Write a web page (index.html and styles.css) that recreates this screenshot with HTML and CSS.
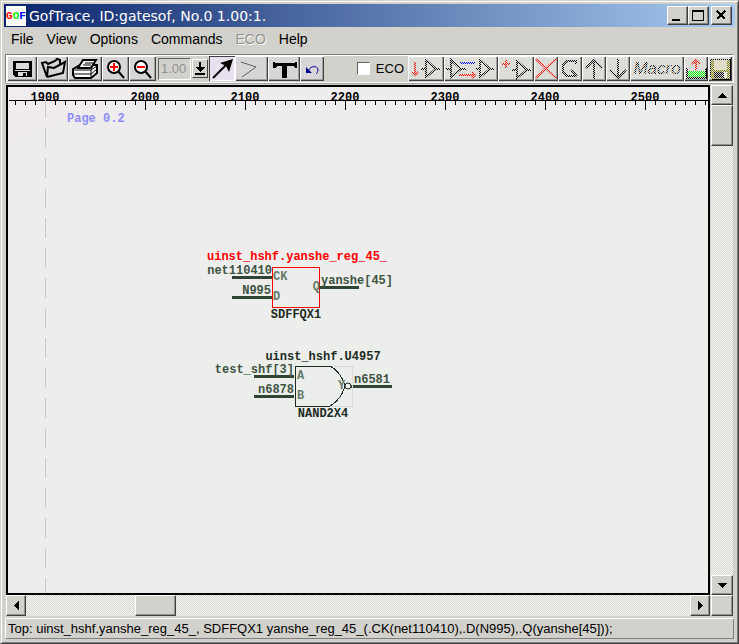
FILE: index.html
```
<!DOCTYPE html>
<html lang="en">

<head>
    <meta charset="UTF-8">
    <meta name="viewport" content="width=device-width, initial-scale=1.0">
    <title>GofTrace</title>
    <link rel="stylesheet" href="styles.css">
</head>

<body>
    <div class="window">
        <header class="title-bar">
            <div class="app-icon"><span class="red">G</span><span class="green">O</span><span class="blue">F</span></div>
            <h1 class="title">GofTrace, ID:gatesof, No.0 1.00:1.</h1>
            <div class="window-controls">
                <button class="window-button" aria-label="Minimize">
                    <svg width="19" height="17"><path d="M4 12h8v2H4z" /></svg>
                </button>
                <button class="window-button" aria-label="Maximize">
                    <svg width="19" height="17"><path d="M3 3h12v11H3zM4 5v8h10V5z" fill-rule="evenodd" /></svg>
                </button>
                <button class="window-button close" aria-label="Close">
                    <svg width="19" height="17"><path d="M5 4l8 8M13 4l-8 8" stroke="#000" stroke-width="2" /></svg>
                </button>
            </div>
        </header>

        <nav class="menu-bar">
            <button class="menu-item">File</button>
            <button class="menu-item">View</button>
            <button class="menu-item">Options</button>
            <button class="menu-item">Commands</button>
            <button class="menu-item" disabled>ECO</button>
            <button class="menu-item">Help</button>
        </nav>

        <div class="toolbar">
            <div class="tool-group">
                <button class="tool" aria-label="Save">
                    <svg width="30" height="25">
                        <path d="M6 5h19v16H8l-2-2z" />
                        <path d="M9 7h13v6H9zM8 14h15v1H8z" fill="#dcdad8" />
                        <path d="M11 16h9v4h-9z" fill="#dcdad8" />
                        <path d="M16 17h3v3h-3z" />
                    </svg>
                </button>
                <button class="tool" aria-label="Open">
                    <svg class="smooth" width="31" height="25">
                        <path class="line" d="M10 21L5 7l4-1 2 2 7-3 2-2 3 1v4M10 21l1-10 6 1 11-6-2 11-16 4" stroke-width="2" />
                    </svg>
                </button>
                <button class="tool" aria-label="Print">
                    <svg class="smooth" width="34" height="25">
                        <path d="M5 13l7-4h17v8l-6 5H7l-2-3z" fill="#fff" stroke="#000" stroke-width="2" />
                        <path d="M10 12l5-8h13l-5 8z" fill="#fff" stroke="#000" stroke-width="2" />
                        <path class="line" d="M15 9h8M17 7h8" />
                        <path class="line" d="M5 14h18l6-4M5 18h18l6-5M23 14v8" />
                    </svg>
                </button>
                <button class="tool" aria-label="Zoom in">
                    <svg class="smooth" width="27" height="25">
                        <circle cx="12" cy="11" r="6" fill="#fff" stroke="#000" stroke-width="2" />
                        <path d="M16 15l6 7" stroke="#000" stroke-width="2" />
                        <path d="M11 7h2v3h3v2h-3v3h-2v-3H8v-2h3z" fill="#f00" />
                    </svg>
                </button>
                <button class="tool" aria-label="Zoom out">
                    <svg class="smooth" width="27" height="25">
                        <circle cx="12" cy="11" r="6" fill="#fff" stroke="#000" stroke-width="2" />
                        <path d="M16 15l6 7" stroke="#000" stroke-width="2" />
                        <path d="M8 10h8v2H8z" fill="#f00" />
                    </svg>
                </button>
                <input class="zoom-value" type="text" value="1.00" aria-label="Zoom" disabled>
                <button class="zoom-drop" aria-label="Zoom list">
                    <svg width="14" height="17"><path d="M6 2h2v5h4l-5 5-5-5h4zM2 13h10v2H2z" /></svg>
                </button>
                <button class="tool pressed" aria-label="Select">
                    <svg class="smooth" width="26" height="25">
                        <path d="M4 22L18 8" stroke="#000" stroke-width="2" />
                        <path d="M24 3l-4 13-3-6-6-3z" />
                    </svg>
                </button>
                <button class="tool" aria-label="Line">
                    <svg class="smooth" width="33" height="25"><path class="line gray" d="M6 6l15 5-14 10" /></svg>
                </button>
                <button class="tool" aria-label="Text">
                    <svg width="32" height="25"><path d="M5 6h2v1h20V6h2v6h-2l-2-2h-6v12h-5V10H9l-2 2H5z" /></svg>
                </button>
                <button class="tool" aria-label="Undo">
                    <svg class="smooth" width="24" height="25">
                        <path d="M6 11v6h6z" fill="#000090" />
                        <path d="M9 14c1-4 9-5 9 0 0 2-1 3-2 4" fill="none" stroke="#000090" />
                    </svg>
                </button>
            </div>
            <div class="tool-group">
                <label class="eco-check"><input type="checkbox">ECO</label>
                <button class="tool" aria-label="Insert gate" disabled>
                    <svg class="smooth" width="36" height="25">
                        <path class="line red-line" d="M7 6v13M4 16l3 3 3-3" />
                        <path class="line" d="M13 13h5M18 4v17l10-8zM28 13h4" />
                    </svg>
                </button>
                <button class="tool" aria-label="Insert chain" disabled>
                    <svg class="smooth" width="54" height="25">
                        <path class="line" d="M2 13h5M7 4v17l10-8zM17 13h5M32 13h4M36 4v17l10-8zM46 13h4" />
                        <path class="line blue-line" d="M16 7h15" />
                        <path class="line red-line" d="M15 19h16M28 16l3 3-3 3" />
                    </svg>
                </button>
                <button class="tool" aria-label="New gate" disabled>
                    <svg class="smooth" width="36" height="25">
                        <path class="line red-line" d="M8 4v8M4 8h8" />
                        <path class="line" d="M14 14h5M19 5v17l10-8zM29 14h4" />
                    </svg>
                </button>
                <button class="tool" aria-label="Delete" disabled>
                    <svg class="smooth" width="24" height="25"><path class="line red-line" d="M2 3l20 19M22 3L2 22" /></svg>
                </button>
                <button class="tool" aria-label="Change" disabled>
                    <svg class="smooth" width="24" height="25">
                        <path class="line" d="M18 8V5H9L5 9v7l4 4h9M13 14l6 6" />
                    </svg>
                </button>
                <button class="tool" aria-label="Up" disabled>
                    <svg class="smooth" width="24" height="25"><path class="line" d="M12 5v18M4 12l8-8 8 8" /></svg>
                </button>
                <button class="tool" aria-label="Down" disabled>
                    <svg class="smooth" width="24" height="25"><path class="line" d="M12 3v18M4 14l8 8 8-8" /></svg>
                </button>
                <button class="tool macro" disabled>Macro</button>
                <button class="tool" aria-label="Load" disabled>
                    <svg class="smooth" width="24" height="25">
                        <path d="M4 15h17v6H4z" fill="#0f0" />
                        <path class="line" d="M3 12v10h19V12" />
                        <path class="line red-line" d="M12 14V4M8 8l4-4 4 4" />
                    </svg>
                </button>
                <button class="tool" aria-label="Save ECO" disabled>
                    <svg width="24" height="25">
                        <path d="M2 3h20v20H4l-2-2z" fill="#808000" stroke="#000" />
                        <path d="M6 4h13v10H6z" fill="#e8e4c0" />
                        <path d="M6 16h10v6H6z" />
                        <path d="M16 16h3v6h-3z" fill="#fff" />
                    </svg>
                </button>
            </div>
        </div>

        <main class="workspace">
            <div class="canvas">
                <svg class="schematic" width="100%" height="100%">
                    <defs>
                        <pattern id="minor" x="7" y="0" width="10" height="4" patternUnits="userSpaceOnUse">
                            <path d="M0 0h1v4H0z" />
                        </pattern>
                        <pattern id="major" x="37" y="0" width="100" height="9" patternUnits="userSpaceOnUse">
                            <path d="M0 0h1v9H0z" />
                        </pattern>
                    </defs>

                    <!-- ruler -->
                    <g class="ruler">
                        <rect x="1" y="13" width="100%" height="1" />
                        <g transform="translate(0 14)">
                            <rect x="1" width="100%" height="4" fill="url(#minor)" />
                            <rect x="100" width="100%" height="9" fill="url(#major)" />
                        </g>
                        <text x="37" y="14">1900</text>
                        <text x="137" y="14">2000</text>
                        <text x="237" y="14">2100</text>
                        <text x="337" y="14">2200</text>
                        <text x="437" y="14">2300</text>
                        <text x="537" y="14">2400</text>
                        <text x="637" y="14">2500</text>
                    </g>

                    <!-- page edge -->
                    <line class="page-edge" x1="37" y1="11" x2="37" y2="100%" />
                    <text class="page-name" x="59" y="35">Page 0.2</text>

                    <!-- flip-flop -->
                    <g class="gate">
                        <text class="selected" x="199" y="173">uinst_hshf.yanshe_reg_45_</text>
                        <path class="wire" d="M224 190h40M224 210h40M312 200h39" />
                        <rect class="body selected" x="264" y="180" width="47" height="40" />
                        <text class="net end" x="264" y="187">net110410</text>
                        <text class="net end" x="263" y="207">N995</text>
                        <text class="net" x="313" y="197">yanshe[45]</text>
                        <text class="pin" x="265" y="193">CK</text>
                        <text class="pin" x="265" y="213">D</text>
                        <text class="pin end" x="312" y="203">Q</text>
                        <text class="mid" x="288" y="231">SDFFQX1</text>
                    </g>

                    <!-- nand -->
                    <g class="gate">
                        <text class="mid" x="315" y="273">uinst_hshf.U4957</text>
                        <path class="wire" d="M246 289h40M246 309h40M343 299h41" />
                        <path class="bounds" d="M322 279h22v40h-22" />
                        <path class="body" d="M322 279h-35v40h35q11-6 15-20q-4-14-15-20" />
                        <circle class="body smooth" cx="340" cy="299" r="3" />
                        <text class="net end" x="286" y="286">test_shf[3]</text>
                        <text class="net end" x="286" y="306">n6878</text>
                        <text class="net" x="346" y="296">n6581</text>
                        <text class="pin" x="289" y="292">A</text>
                        <text class="pin" x="289" y="312">B</text>
                        <text class="pin" x="330" y="302">Y</text>
                        <text class="mid" x="315" y="330">NAND2X4</text>
                    </g>
                </svg>
            </div>
            <div class="scrollbar vertical">
                <button class="scroll-button" aria-label="Scroll up"><svg width="9" height="5"><path d="M4 0h1l4 5H0z" /></svg></button>
                <div class="thumb"></div>
                <button class="scroll-button last" aria-label="Scroll down"><svg width="9" height="5"><path d="M0 0h9L5 5H4z" /></svg></button>
            </div>
            <div class="scrollbar horizontal">
                <button class="scroll-button" aria-label="Scroll left"><svg width="5" height="9"><path d="M5 0v9L0 5V4z" /></svg></button>
                <div class="thumb"></div>
                <button class="scroll-button last" aria-label="Scroll right"><svg width="5" height="9"><path d="M0 0v9l5-4V4z" /></svg></button>
            </div>
            <div class="corner"></div>
        </main>

        <footer class="status-bar">Top: uinst_hshf.yanshe_reg_45_, SDFFQX1 yanshe_reg_45_(.CK(net110410),.D(N995),.Q(yanshe[45]));</footer>
    </div>
</body>

</html>
```
FILE: styles.css
```
* {
    box-sizing: border-box;
}

body,
html {
    margin: 0;
    height: 100%;
    font-family: "Liberation Sans", Arial, sans-serif;
    font-size: 14px;
    background: #d2d1cc;
    overflow: hidden;
}

button {
    margin: 0;
    padding: 0;
    font: inherit;
    color: #000;
    background: #d2d1cc;
    border: 0;
}

svg {
    display: block;
    shape-rendering: crispEdges;
}

.smooth {
    shape-rendering: geometricPrecision;
}

.window {
    display: flex;
    flex-direction: column;
    height: 100vh;
    padding: 3px;
    border: 1px solid;
    border-color: #d2d1cc #404040 #404040 #d2d1cc;
    box-shadow: inset 1px 1px #fff, inset -1px -1px #808080;
}

/* title bar */

.title-bar {
    display: flex;
    align-items: center;
    flex: none;
    height: 23px;
    padding: 0 3px 0 2px;
    background: linear-gradient(to right, #0a246a, #a6caf0);
}

.app-icon {
    display: flex;
    justify-content: center;
    align-items: center;
    width: 20px;
    height: 20px;
    background: #fff;
    font: bold 11px "Liberation Mono", monospace;
}

.red {
    color: #f00;
}

.green {
    color: #0e0;
}

.blue {
    color: #00f;
}

.title {
    flex: 1;
    margin: 0 0 0 3px;
    font: 14px "DejaVu Sans", sans-serif;
    color: #fff;
    white-space: nowrap;
}

.window-controls {
    display: flex;
}

.window-button {
    width: 21px;
    height: 19px;
    border: 1px solid;
    border-color: #fff #404040 #404040 #fff;
    box-shadow: inset -1px -1px #808080;
}

.window-button.close {
    margin-left: 2px;
}

/* menu */

.menu-bar {
    display: flex;
    align-items: center;
    flex: none;
    gap: 13px;
    height: 27px;
    padding: 0 7px 3px;
}

.menu-item:disabled {
    color: #929290;
    text-shadow: 1px 1px #fff;
}

/* toolbar */

.toolbar {
    display: flex;
    justify-content: space-between;
    flex: none;
    height: 29px;
    margin: 0 1px;
    padding: 1px;
    border: 1px solid;
    border-color: #808080 #fff #fff #808080;
    box-shadow: inset 1px 1px #fff, 0 1px #a0a09c;
}

.tool-group {
    display: flex;
    align-items: center;
}

.tool {
    position: relative;
    height: 25px;
    background: #d8d5d8;
    box-shadow: inset 1px 1px #fff, inset -1px -1px #404040, inset -2px -2px #a0a09c;
}

.tool.pressed {
    background: #e8e0ee;
    box-shadow: inset 1px 1px #404040, inset -1px -1px #fff;
}

.tool:disabled {
    background: #e2e2de;
}

/* stipple over disabled tools */
.tool:disabled::after {
    content: "";
    position: absolute;
    inset: 2px;
    background: repeating-conic-gradient(#d8d8d3 0 25%, transparent 0 50%) 0 0 / 2px 2px;
}

.line {
    fill: none;
    stroke: #000;
}

.tool:disabled .line {
    stroke-width: 2;
}

.tool .gray {
    stroke: #606060;
}

.tool .red-line {
    stroke: #f00;
}

.tool .blue-line {
    stroke: #00f;
}

.macro {
    width: 54px;
    font-size: 17px;
    font-style: italic;
    color: #000;
}

.zoom-value {
    width: 33px;
    height: 22px;
    margin: 0 1px 0 2px;
    padding: 0 2px;
    border: 1px solid;
    border-color: #606060 #fff #fff #606060;
    background: #d2d1cc;
    color: #929290;
    font: 13px "Liberation Sans", sans-serif;
}

.zoom-drop {
    width: 16px;
    height: 19px;
    margin-right: 1px;
    border: 1px solid;
    border-color: #fff #404040 #404040 #fff;
}

.eco-check {
    display: flex;
    align-items: center;
    gap: 6px;
    margin-right: 4px;
    font-size: 13px;
}

.eco-check input {
    appearance: none;
    width: 13px;
    height: 13px;
    margin: 0;
    border: 1px solid;
    border-color: #606060 #fff #fff #606060;
    background: #fff;
}

/* drawing area */

.workspace {
    display: grid;
    grid-template-columns: 1fr 22px;
    grid-template-rows: 1fr 21px;
    column-gap: 1px;
    flex: 1;
    min-height: 0;
    padding: 2px 2px 0;
}

.canvas {
    min-width: 0;
    min-height: 0;
    border: 2px solid #000;
    background: linear-gradient(160deg, #f0ecef, #eceeec 50%);
    overflow: hidden;
}

.schematic text {
    font: bold 12px "Liberation Mono", "Courier New", monospace;
    fill: #1c2c1e;
}

.schematic .ruler text {
    fill: #000;
    text-anchor: middle;
}

.page-edge {
    stroke: #c8c8c8;
    stroke-dasharray: 20 10;
}

.schematic .page-name {
    fill: #8c8cf4;
}

.wire {
    stroke: #304432;
    stroke-width: 3;
}

.body {
    fill: none;
    stroke: #1c2c1e;
}

.body.selected {
    stroke: #f00;
}

.bounds {
    fill: none;
    stroke: #d8dad8;
}

.schematic text.selected {
    fill: #f00;
}

.schematic .net {
    fill: #405442;
}

.schematic .pin {
    fill: #667a68;
}

.mid {
    text-anchor: middle;
}

.end {
    text-anchor: end;
}

/* scrollbars */

.scrollbar {
    display: flex;
    background: repeating-conic-gradient(#d8d8d3 0 25%, #f4f4f0 0 50%) 0 0 / 2px 2px;
}

.vertical {
    flex-direction: column;
}

.scroll-button,
.thumb,
.corner {
    background: #d2d1cc;
    border: 1px solid;
    border-color: #fff #404040 #404040 #fff;
    box-shadow: inset -1px -1px #909090;
}

.scroll-button {
    display: flex;
    align-items: center;
    justify-content: center;
    flex: none;
    width: 20px;
    height: 20px;
}

.vertical .scroll-button {
    width: 100%;
}

.horizontal .scroll-button {
    height: 100%;
}

.vertical .thumb {
    height: 41px;
}

.horizontal .thumb {
    width: 41px;
    margin-left: 109px;
}

.vertical .last {
    margin-top: auto;
}

.horizontal .last {
    margin-left: auto;
}

/* status */

.status-bar {
    flex: none;
    height: 21px;
    margin: 2px 1px 1px;
    padding: 0 2px;
    border: 1px solid;
    border-color: #fff #808080 #808080 #fff;
    font-size: 13px;
    line-height: 20px;
    white-space: nowrap;
    overflow: hidden;
}
```
